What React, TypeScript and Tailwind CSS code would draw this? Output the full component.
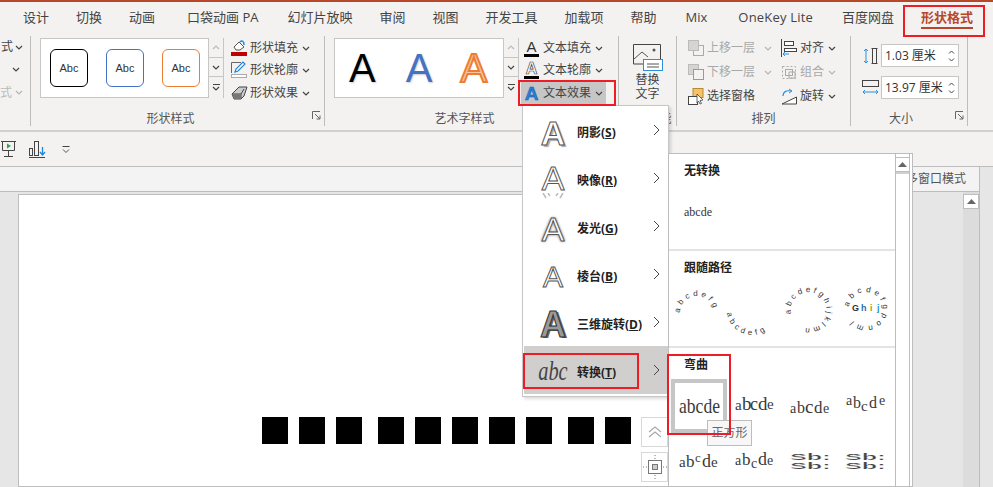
import React from "react";

const tabs: [string, string][] = [
  ["设计", "ml-[23px]"],
  ["切换", "ml-[27px]"],
  ["动画", "ml-[27px]"],
  ["口袋动画 PA", "ml-[32px]"],
  ["幻灯片放映", "ml-[29px]"],
  ["审阅", "ml-[27px]"],
  ["视图", "ml-[27px]"],
  ["开发工具", "ml-[27px]"],
  ["加载项", "ml-[27px]"],
  ["帮助", "ml-[27px]"],
  ["Mix", "ml-[29px]"],
  ["OneKey Lite", "ml-[31px] tracking-[0.2px]"],
  ["百度网盘", "ml-[29px]"],
];

const Caret: React.FC<{ muted?: boolean }> = ({ muted }) => (
  <svg width="8" height="5" viewBox="0 0 8 5" className="shrink-0">
    <path d="M1 1l3 3 3-3" fill="none" stroke={muted ? "#b5b5b5" : "#444"} strokeWidth="1.2" />
  </svg>
);

const Launcher: React.FC = () => (
  <svg width="9" height="9" viewBox="0 0 9 9" className="absolute right-[3px] top-[1px]">
    <path d="M.5 8V.5H8M3 3l5 5M8 4.5V8H4.5" fill="none" stroke="#666" />
  </svg>
);

const Group: React.FC<{ width: string; label: string; labelPad?: string; launcher?: boolean; children: React.ReactNode }> = ({ width, label, labelPad, launcher, children }) => (
  <div className={`${width} h-[90px] shrink-0 flex flex-col border-r border-[#bdbdbd]`}>
    <div className="h-[74px] shrink-0 flex items-start">{children}</div>
    <div className={`relative h-[18px] shrink-0 flex items-center justify-center text-[12px] text-[#555] ${labelPad ?? ""}`}>
      {label}
      {launcher && <Launcher />}
    </div>
  </div>
);

const GalleryScroll: React.FC = () => (
  <div className="w-[15px] h-[60px] flex flex-col border-l border-[#c6c6c6] bg-white">
    <div className="h-[20px] flex items-center justify-center border-b border-[#c6c6c6] bg-[#f3f2f1]">
      <svg width="8" height="5" viewBox="0 0 8 5"><path d="M1 4l3-3 3 3" fill="none" stroke="#bbb" strokeWidth="1.2" /></svg>
    </div>
    <div className="h-[19px] flex items-center justify-center border-b border-[#c6c6c6] bg-[#f3f2f1]"><Caret /></div>
    <div className="flex-1 flex flex-col items-center justify-center gap-[1px] bg-[#f3f2f1]">
      <div className="w-[7px] h-px bg-[#444]" />
      <Caret />
    </div>
  </div>
);

const AbcBox: React.FC<{ border: string }> = ({ border }) => (
  <div className={`w-[38px] h-[38px] rounded-[6px] border-[1.5px] ${border} flex items-center justify-center bg-white text-[11px] text-[#333] font-['Liberation_Sans',sans-serif]`}>
    Abc
  </div>
);

const ActionRow: React.FC<{ icon: React.ReactNode; label: string; muted?: boolean; caretGap?: string; className?: string }> = ({ icon, label, muted, caretGap, className }) => (
  <div className={`h-[22px] flex items-center text-[12px] ${muted ? "text-[#a8a8a8]" : "text-[#444]"} ${className ?? ""}`}>
    <span className="w-[19px] h-[18px] flex items-center shrink-0">{icon}</span>
    <span>{label}</span>
    {caretGap && <span className={caretGap}><Caret muted={muted} /></span>}
  </div>
);

const FillIcon = (
  <svg width="17" height="18" viewBox="0 0 17 18">
    <path d="M3 8l5-5 5 5-4 3H5z" fill="#fff" stroke="#555" />
    <path d="M9 3c2-2 4-1 4 3" fill="none" stroke="#1e88d8" strokeWidth="1.5" />
    <rect x="0" y="13" width="16" height="4" fill="#c00000" />
  </svg>
);
const PenIcon = (
  <svg width="17" height="18" viewBox="0 0 17 18">
    <path d="M.5 12V1.5H10" fill="none" stroke="#666" />
    <path d="M4 11l1-3 7-7 2 2-7 7z" fill="#fff" stroke="#1e88d8" strokeWidth="1.2" />
    <rect x=".5" y="13.5" width="15" height="3" fill="#fff" stroke="#aaa" />
  </svg>
);
const EffectIcon = (
  <svg width="17" height="16" viewBox="0 0 17 16">
    <path d="M1 9l7-7h8l-3 9-3 3H3z" fill="#ccc" stroke="#444" />
    <path d="M1 9h9l3-5M10 9v5" fill="none" stroke="#444" />
    <path d="M1 9l2 5h7V9z" fill="#777" />
  </svg>
);

const LetterIcon: React.FC<{ variant: "fill" | "line" | "fx" }> = ({ variant }) => (
  <span className="relative w-[15px] h-[18px] flex flex-col items-center leading-none font-['Liberation_Sans',sans-serif]">
    {variant === "fill" && <span className="text-[15px] text-[#333] h-[14px]">A</span>}
    {variant === "line" && <span className="text-[16px] font-bold text-white [-webkit-text-stroke:0.7px_#444] h-[14px]">A</span>}
    {variant === "fx" && <span className="text-[19px] font-bold text-[#2b7cd3] [-webkit-text-stroke:0.5px_#0d5fb0]">A</span>}
    {variant !== "fx" && <span className="w-[15px] h-[3px] bg-black mt-px" />}
  </span>
);

const SwapIcon = (
  <svg width="30" height="28" viewBox="0 0 30 28">
    <path d="M.5 21V1.5h27V16" fill="none" stroke="#444" />
    <path d="M1 16l8-7 6 5" fill="none" stroke="#555" />
    <circle cx="21" cy="7" r="1.5" fill="#555" />
    <path d="M.5 21H10" stroke="#444" />
    <rect x="10.5" y="16.5" width="19" height="11" fill="#fff" stroke="#2b8fdc" />
    <path d="M14 21h12M14 24h12" stroke="#555" />
  </svg>
);
const LayerIcon: React.FC<{ down?: boolean }> = ({ down }) => (
  <svg width="16" height="16" viewBox="0 0 16 16">
    {down ? (
      <>
        <rect x=".5" y=".5" width="10" height="10" fill="#d4d4d4" stroke="#bbb" />
        <rect x="5.5" y="5.5" width="10" height="10" fill="#f3f2f1" stroke="#999" />
      </>
    ) : (
      <>
        <rect x="5.5" y="5.5" width="10" height="10" fill="#f3f2f1" stroke="#aaa" />
        <rect x=".5" y=".5" width="10" height="10" fill="#d4d4d4" stroke="#bbb" />
      </>
    )}
  </svg>
);
const PaneIcon = (
  <svg width="16" height="17" viewBox="0 0 16 17">
    <rect x="5" y=".5" width="10" height="9" fill="#f5c26b" stroke="#b98a2f" />
    <rect x=".5" y="8.5" width="9" height="8" fill="#fff" stroke="#444" />
    <path d="M9 6l6 6-3 .5 1.5 3-1.5.5-1.5-3-1.5 2z" fill="#fff" stroke="#444" strokeWidth=".8" />
  </svg>
);
const AlignIcon = (
  <svg width="16" height="18" viewBox="0 0 16 18">
    <path d="M.5 0v18" stroke="#444" />
    <rect x="3.5" y="2.5" width="9" height="4" fill="#fff" stroke="#444" />
    <rect x="3.5" y="9.5" width="12" height="3" fill="#fff" stroke="#444" />
    <path d="M8 15H2m2-2l-2 2 2 2" fill="none" stroke="#2b8fdc" />
  </svg>
);
const GroupIcon = (
  <svg width="16" height="17" viewBox="0 0 16 17">
    <rect x="1.5" y="2.5" width="13" height="12" fill="none" stroke="#aaa" strokeDasharray="2 2" />
    <rect x="4.5" y="5.5" width="7" height="6" fill="#f3f2f1" stroke="#aaa" />
    <path d="M8 8h6v6H8z" fill="none" stroke="#aaa" />
  </svg>
);
const RotateIcon = (
  <svg width="16" height="17" viewBox="0 0 16 17">
    <path d="M15.5 9v7H1z" fill="#fff" stroke="#444" />
    <path d="M2 8c0-4 3-6 8-5" fill="none" stroke="#2b8fdc" strokeWidth="1.2" />
    <path d="M8 1l3 2-3 2" fill="none" stroke="#2b8fdc" />
  </svg>
);
const HeightIcon = (
  <svg width="17" height="16" viewBox="0 0 17 16">
    <path d="M4 1v14M2 3l2-2 2 2M2 13l2 2 2-2" fill="none" stroke="#2b8fdc" />
    <path d="M9.5.5h6M9.5 15.5h6M10.5.5v15M14.5.5v15" fill="none" stroke="#444" />
  </svg>
);
const WidthIcon = (
  <svg width="17" height="16" viewBox="0 0 17 16">
    <rect x=".5" y=".5" width="16" height="6" fill="none" stroke="#444" />
    <path d="M1 12h15M3 10l-2 2 2 2M14 10l2 2-2 2" fill="none" stroke="#2b8fdc" />
  </svg>
);

const SizeField: React.FC<{ icon: React.ReactNode; value: string; className?: string }> = ({ icon, value, className }) => (
  <div className={`flex items-center ${className ?? ""}`}>
    <span className="w-[19px] shrink-0 flex justify-start">{icon}</span>
    <div className="w-[78px] h-[23px] bg-white border border-[#c6c6c6] flex items-center pl-[3px] pr-[3px] text-[12px] text-[#333]">
      <span className="whitespace-nowrap">{value}</span>
      <div className="ml-auto flex flex-col gap-[4px]">
        <svg width="7" height="4" viewBox="0 0 7 4"><path d="M1 3.5l2.5-2.5L6 3.5" fill="none" stroke="#444" /></svg>
        <svg width="7" height="4" viewBox="0 0 7 4"><path d="M1 .5L3.5 3 6 .5" fill="none" stroke="#444" /></svg>
      </div>
    </div>
  </div>
);

const Ribbon: React.FC = () => (
  <div className="h-[97px] bg-[#f3f2f1] pt-[3px] flex">
    <Group width="w-[31px]" label="">
      <div className="w-full flex flex-col items-end pr-[7px] text-[12px] text-[#444] overflow-hidden">
        <div className="h-[22px] flex items-center gap-[3px]"><span className="-mr-[1px]">式</span><Caret /></div>
        <div className="h-[23px] flex items-center pr-[3px]"><Caret /></div>
        <div className="h-[23px] flex items-center gap-[3px] text-[#bbb]"><span>式</span><Caret muted /></div>
      </div>
    </Group>

    <Group width="w-[294px]" label="形状样式" labelPad="pr-[14px]" launcher>
      <div className="ml-[9px] mt-[2px] w-[184px] h-[60px] border border-[#c6c6c6] bg-white flex items-center">
        <div className="flex-1 flex items-center gap-[18px] pl-[9px]">
          <AbcBox border="border-black" />
          <AbcBox border="border-[#4472c4]" />
          <AbcBox border="border-[#ed7d31]" />
        </div>
        <GalleryScroll />
      </div>
      <div className="ml-[7px] pt-px flex flex-col">
        <ActionRow icon={FillIcon} label="形状填充" caretGap="ml-[4px]" />
        <ActionRow icon={PenIcon} label="形状轮廓" caretGap="ml-[4px]" />
        <ActionRow icon={EffectIcon} label="形状效果" caretGap="ml-[4px]" className="mt-px" />
      </div>
    </Group>

    <Group width="w-[294px]" label="艺术字样式" labelPad="pr-[14px]" launcher>
      <div className="ml-[9px] mt-[2px] w-[185px] h-[60px] border border-[#c6c6c6] bg-white flex items-center">
        <div className="flex-1 flex items-center justify-start pl-[14px] gap-[30px] text-[40px] leading-none font-['Liberation_Sans',sans-serif]">
          <span className="text-black [text-shadow:1px_1px_2px_#ccc]">A</span>
          <span className="text-[#4472c4] [text-shadow:1px_1px_2px_#ccc]">A</span>
          <span className="text-[#f6c4a2] [-webkit-text-stroke:2px_#ed7d31] -ml-[2px]">A</span>
        </div>
        <GalleryScroll />
      </div>
      <div className="ml-[5px] pt-px flex flex-col">
        <ActionRow icon={<LetterIcon variant="fill" />} label="文本填充" caretGap="ml-[4px]" />
        <ActionRow icon={<LetterIcon variant="line" />} label="文本轮廓" caretGap="ml-[4px]" />
        <ActionRow icon={<LetterIcon variant="fx" />} label="文本效果" caretGap="ml-[4px]" className="bg-[#c6c6c6] -ml-[3px] pl-[3px] -mr-[3px] mt-px" />
      </div>
    </Group>

    <Group width="w-[58px]" label="辅助功能">
      <div className="w-full flex flex-col items-center pt-[7px] text-[12px] leading-[14px] text-[#444]">
        {SwapIcon}
        <span className="mt-[2px]">替换</span>
        <span>文字</span>
      </div>
    </Group>

    <Group width="w-[174px]" label="排列">
      <div className="ml-[11px] w-[93px] flex flex-col">
        <ActionRow icon={<LayerIcon />} label="上移一层" muted caretGap="ml-[9px]" className="h-[24px]" />
        <ActionRow icon={<LayerIcon down />} label="下移一层" muted caretGap="ml-[9px]" className="h-[24px]" />
        <ActionRow icon={PaneIcon} label="选择窗格" className="h-[24px]" />
      </div>
      <div className="flex flex-col">
        <ActionRow icon={AlignIcon} label="对齐" caretGap="ml-[4px]" className="h-[24px]" />
        <ActionRow icon={GroupIcon} label="组合" muted caretGap="ml-[4px]" className="h-[24px]" />
        <ActionRow icon={RotateIcon} label="旋转" caretGap="ml-[4px]" className="h-[24px]" />
      </div>
    </Group>

    <Group width="w-[117px]" label="大小" labelPad="pr-[16px]" launcher>
      <div className="ml-[11px] pt-[8px] flex flex-col">
        <SizeField icon={HeightIcon} value="1.03 厘米" />
        <SizeField icon={WidthIcon} value="13.97 厘米" className="mt-[9px]" />
      </div>
    </Group>
  </div>
);

const QuickBar: React.FC = () => (
  <div className="h-[34px] bg-[#f3f2f1] flex items-center pl-px">
    <svg width="15" height="17" viewBox="0 0 15 17">
      <path d="M0 .5h15M1.5 .5v9h12v-9M7.5 9.5v6M3 15.5h9" fill="none" stroke="#444" />
      <path d="M6 2.5l4 2.5-4 2.5z" fill="#2ea44f" />
    </svg>
    <svg width="17" height="17" viewBox="0 0 17 17" className="ml-[13px]">
      <rect x=".5" y="7.5" width="3" height="7" fill="none" stroke="#444" />
      <rect x="5.5" y=".5" width="4" height="14" fill="none" stroke="#444" />
      <path d="M13.5 6v7M11 11l2.5 3 2.5-3" fill="none" stroke="#1e88d8" strokeWidth="1.3" />
      <path d="M0 16.5h16" stroke="#444" />
    </svg>
    <svg width="8" height="7" viewBox="0 0 8 7" className="ml-[16px]">
      <path d="M.5 .5h7" stroke="#444" />
      <path d="M1 3.5l3 3 3-3" fill="none" stroke="#555" />
    </svg>
  </div>
);

const menuItems: { label: string; key: string; icon: React.ReactNode }[] = [
  { label: "阴影", key: "S", icon: <span className="text-[34px] font-bold leading-none text-white [-webkit-text-stroke:1px_#555] [text-shadow:2px_2px_1px_#aaa]">A</span> },
  {
    label: "映像",
    key: "R",
    icon: (
      <span className="flex flex-col items-center leading-none">
        <span className="text-[34px] leading-[28px] text-white [-webkit-text-stroke:1px_#555]">A</span>
        <svg width="24" height="6" viewBox="0 0 24 6" className="mt-px">
          <path d="M2 0l3 5M22 0l-3 5M7 0l2 3M17 0l-2 3" fill="none" stroke="#bbb" strokeWidth="1.5" />
        </svg>
      </span>
    ),
  },
  { label: "发光", key: "G", icon: <span className="text-[34px] leading-none text-white [-webkit-text-stroke:1px_#555] [text-shadow:0_0_3px_#999,0_0_3px_#999]">A</span> },
  { label: "棱台", key: "B", icon: <span className="text-[30px] leading-none text-white [-webkit-text-stroke:1px_#555]">A</span> },
  { label: "三维旋转", key: "D", icon: <span className="text-[36px] font-bold leading-none text-[#999] [-webkit-text-stroke:1px_#333] [text-shadow:2px_1px_0_#666]">A</span> },
];

const MenuRow: React.FC<{ label: string; hotkey: string; icon: React.ReactNode; active?: boolean }> = ({ label, hotkey, icon, active }) => (
  <div className={`flex items-center ${active ? "h-[48px] -mt-[3px] pt-[5px] ml-px bg-[#d0cfcd]" : "h-[48px]"}`}>
    <span className={`h-full shrink-0 flex items-center justify-center font-['Liberation_Sans',sans-serif] ${active ? "w-[53px]" : "w-[54px] pl-[6px]"}`}>{icon}</span>
    <span className="text-[12px] font-bold text-[#222] whitespace-nowrap">
      {label}(<span className="underline">{hotkey}</span>)
    </span>
    <svg width="7" height="12" viewBox="0 0 7 12" className="ml-auto mr-[8px] shrink-0 -translate-y-[3px]">
      <path d="M1 1l5 5-5 5" fill="none" stroke="#444" />
    </svg>
  </div>
);

const EffectMenu: React.FC = () => (
  <div className="absolute left-[522px] top-[105px] w-[147px] h-[292px] bg-white border border-[#c6c6c6] pt-[3px] shadow-[2px_2px_3px_rgba(0,0,0,0.15)]">
    {menuItems.map((m) => (
      <MenuRow key={m.key} label={m.label} hotkey={m.key} icon={m.icon} />
    ))}
    <MenuRow
      label="转换"
      hotkey="T"
      active
      icon={<span className="pl-[5px] text-[24px] leading-none italic text-[#444] font-['Liberation_Serif',serif] inline-block scale-x-[0.85] scale-y-110 -translate-y-[2px]">abc</span>}
    />
  </div>
);

type Glyph = [string, number, number, number];

const Warp: React.FC<{ x: number; y: number; glyphs: Glyph[] }> = ({ x, y, glyphs }) => (
  <svg width="56" height="54" viewBox={`${x} ${y} 56 54`} fontFamily="'Liberation Serif',serif" fill="#3a3a3a">
    {glyphs.map(([c, gx, gy, size], i) => (
      <text key={i} x={gx} y={gy} fontSize={size}>{c}</text>
    ))}
  </svg>
);

const Ring: React.FC<{ x: number; y: number; offset: number }> = ({ x, y, offset }) => (
  <svg width="56" height="54" viewBox={`${x} ${y} 56 54`} fontFamily="'Liberation Sans',sans-serif" fontWeight="700" fill="#444" stroke="#fff" strokeWidth=".3">
    <text transform={`translate(${offset} 460) scale(1.8 .62)`} fontSize="14">Sb:</text>
    <text transform={`translate(${offset} 469) scale(1.8 .62)`} fontSize="14">Sb:</text>
  </svg>
);

const PathText: React.FC = () => (
  <svg width="224" height="60" viewBox="670 283 224 60" fontFamily="'Liberation Sans',sans-serif" fontSize="8" fill="#333">
    <defs>
      <path id="arch" d="M681 313A17 17 0 1 1 713 321" />
      <path id="wave" d="M728 310A25 25 0 0 0 778 310" />
      <path id="circleA" d="M792 314A18 18 0 1 1 796 322" />
      <path id="circleB" d="M850 307A17 17 0 1 1 853 319" />
    </defs>
    <text letterSpacing="3.2"><textPath href="#arch">abcdefg</textPath></text>
    <text letterSpacing="3.6"><textPath href="#wave" startOffset="3">abcdefg</textPath></text>
    <text letterSpacing="2.9"><textPath href="#circleA">abcdefghijklmn</textPath></text>
    <text letterSpacing="3.7"><textPath href="#circleB">abcdefgponml</textPath></text>
    <text y="311" fontSize="9" fontWeight="600">
      <tspan x="853">G</tspan>
      <tspan x="862" fill="#2b6cb0">h</tspan>
      <tspan x="871" fill="#c58a1b">i</tspan>
      <tspan x="878" fill="#1f93c9">j</tspan>
    </text>
  </svg>
);

const Heading: React.FC<{ children: React.ReactNode }> = ({ children }) => (
  <div className="h-[32px] pl-[15px] pt-px flex items-center text-[12px] font-bold text-[#222]">{children}</div>
);

const TransformGallery: React.FC = () => (
  <div className="absolute left-[668px] top-[153px] w-[245px] h-[334px] bg-white border border-[#bdbdbd] flex overflow-hidden">
    <div className="w-[226px] shrink-0">
      <div className="h-[97px] border-b-2 border-[#e3e3e3]">
        <Heading>无转换</Heading>
        <div className="pl-[15px] pt-[20px] text-[12px] leading-[12px] text-[#333] font-['Liberation_Serif',serif]">abcde</div>
      </div>
      <div className="h-[97px] border-b-2 border-[#e3e3e3]">
        <Heading>跟随路径</Heading>
        <PathText />
      </div>
      <div className="h-[31px] pl-[15px] pt-[2px] flex items-center text-[12px] font-bold text-[#222]">弯曲</div>
      <div className="pl-[2px] grid grid-cols-[repeat(4,56px)]">
        <div className="w-[56px] h-[54px] border-[4px] border-[#c6c6c6] flex items-center justify-center">
          <svg width="48" height="46" viewBox="675 383 48 46" className="overflow-visible" fontFamily="'Liberation Serif',serif" fill="#3a3a3a">
            <text x="679" y="413" fontSize="22" textLength="41" lengthAdjust="spacingAndGlyphs">abcde</text>
          </svg>
        </div>
        <Warp x={727} y={379} glyphs={[["a", 735, 410, 15], ["b", 742, 410, 19], ["c", 750, 410, 18], ["d", 758, 410, 19], ["e", 767, 409, 15]]} />
        <Warp x={783} y={379} glyphs={[["a", 790, 413, 14], ["b", 797, 413, 16], ["c", 805, 413, 19], ["d", 814, 413, 17], ["e", 823, 413, 14]]} />
        <Warp x={839} y={379} glyphs={[["a", 846, 405, 14], ["b", 853, 408, 16], ["c", 861, 411, 15], ["d", 869, 408, 16], ["e", 879, 405, 14]]} />
        <Warp x={671} y={433} glyphs={[["a", 679, 467, 15], ["b", 686, 467, 17], ["c", 695, 462, 13], ["d", 702, 467, 18], ["e", 711, 467, 15]]} />
        <Warp x={727} y={433} glyphs={[["a", 735, 465, 14], ["b", 742, 465, 17], ["c", 751, 468, 14], ["d", 758, 465, 18], ["e", 767, 465, 14]]} />
        <Ring x={783} y={433} offset={790} />
        <Ring x={839} y={433} offset={845} />
      </div>
    </div>
    <div className="w-[15px] shrink-0 border-l border-r border-[#bdbdbd] h-full">
      <div className="h-[15px] mt-[3px] flex items-center justify-center border-y border-[#bdbdbd]">
        <svg width="9" height="5" viewBox="0 0 9 5"><path d="M0 5l4.5-5 4.5 5z" fill="#666" /></svg>
      </div>
      <div className="h-[2px] bg-[#d0d0d0]" />
    </div>
  </div>
);

const Squares: React.FC<{ count: number }> = ({ count }) => (
  <div className="flex gap-[11px]">
    {Array.from({ length: count }, (_, i) => (
      <div key={i} className="w-[26px] h-[27px] bg-black" />
    ))}
  </div>
);

const SideHandles: React.FC = () => (
  <div className="ml-[10px] flex flex-col gap-[5px]">
    <div className="w-[27px] h-[30px] border border-[#d8d8d8] flex items-center justify-center bg-white">
      <svg width="14" height="12" viewBox="0 0 14 12"><path d="M1 6l6-5 6 5M1 11l6-5 6 5" fill="none" stroke="#aaa" strokeWidth="1.2" /></svg>
    </div>
    <div className="w-[27px] h-[30px] border border-[#d8d8d8] flex items-center justify-center bg-white">
      <svg width="24" height="24" viewBox="0 0 24 24">
        <rect x="5.5" y="5.5" width="13" height="13" fill="none" stroke="#777" />
        <rect x="9.5" y="9.5" width="5" height="5" fill="#ccc" stroke="#777" />
        <path d="M12 0v4M12 20v4M0 12h4M20 12h4" stroke="#777" strokeDasharray="1 2" />
      </svg>
    </div>
    <div className="w-[27px] h-[30px] border border-[#d8d8d8] bg-white" />
  </div>
);

const Workspace: React.FC = () => (
  <div className="flex-1 flex bg-[#e6e6e6] overflow-hidden">
    <div className="flex-1 flex flex-col min-w-0 border-r border-[#bdbdbd]">
      <div className="h-[25px] shrink-0 bg-[#f3f3f3] border-b border-[#bdbdbd] flex items-center justify-end pr-[13px] text-[12px] text-[#555]">
        多窗口模式
      </div>
      <div className="flex-1 flex min-h-0">
        <div className="ml-[18px] mt-[2px] w-[894px] bg-white border border-[#bdbdbd] pl-[243px] pt-[222px] flex items-start">
          <Squares count={3} />
          <div className="ml-[16px]"><Squares count={5} /></div>
          <div className="ml-[16px]"><Squares count={2} /></div>
          <SideHandles />
        </div>
        <div className="ml-auto w-[16px] bg-[#dcdcdc] flex flex-col">
          <div className="h-[15px] mt-[2px] bg-white border border-[#bdbdbd] flex items-center justify-center">
            <svg width="9" height="5" viewBox="0 0 9 5"><path d="M0 5l4.5-5 4.5 5z" fill="#666" /></svg>
          </div>
        </div>
      </div>
    </div>
    <div className="w-[13px] shrink-0" />
  </div>
);

const App: React.FC = () => {
  return (
    <div className="relative w-[993px] h-[487px] overflow-hidden bg-[#f3f2f1] flex flex-col font-['Open_Sans','Noto_Sans_CJK_SC',sans-serif]">
      <div className="h-[2px] bg-[#b7472a]" />
      <div className="h-[31px] flex items-center text-[13px] text-[#444] whitespace-nowrap">
        {tabs.map(([t, cls]) => (
          <span key={t} className={cls}>{t}</span>
        ))}
        <span className="relative ml-[27px] font-bold text-[#b7472a]">
          形状格式
          <span className="absolute left-0 right-0 top-[19px] h-[2px] bg-[#b7472a]" />
        </span>
      </div>
      <Ribbon />
      <div className="h-[2px] bg-[#d2d0ce]" />
      <QuickBar />
      <div className="h-px bg-[#bdbdbd]" />
      <Workspace />

      <EffectMenu />
      <TransformGallery />

      <div className="absolute left-[707px] top-[420px] w-[45px] h-[26px] bg-[#f7f7f7] border border-[#bdbdbd] flex items-center justify-center text-[12px] text-[#666] whitespace-nowrap">
        正方形
      </div>

      <div className="absolute left-[903px] top-[5px] w-[82px] h-[32px] border-2 border-[#ee1c25]" />
      <div className="absolute left-[518px] top-[80px] w-[98px] h-[26px] border-2 border-[#ee1c25]" />
      <div className="absolute left-[523px] top-[353px] w-[116px] h-[36px] border-2 border-[#ee1c25]" />
      <div className="absolute left-[667px] top-[354px] w-[64px] h-[81px] border-2 border-[#ee1c25]" />
    </div>
  );
};

export default App;
